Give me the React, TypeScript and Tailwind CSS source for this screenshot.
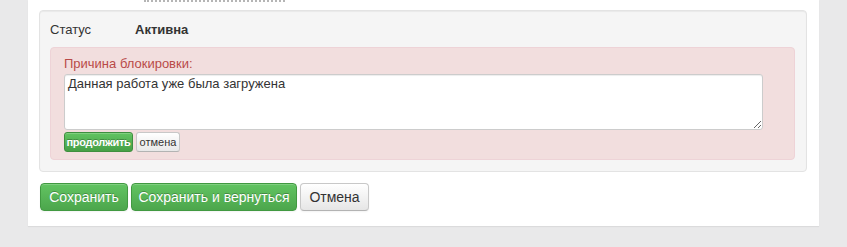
import React from 'react';

const font = { fontFamily: '"Liberation Sans", Arial, sans-serif' };

function GreenButton({ label, w, small }: { label: string; w: number; small?: boolean }) {
  return (
    <button
      className={
        small
          ? 'h-[20px] rounded-[3px] border border-[#3f8f3f] bg-gradient-to-b from-[#62c462] to-[#46a046] text-[11px] font-bold tracking-[-0.3px] leading-[18px] text-white shadow-[inset_0_1px_0_rgba(255,255,255,0.2)] [text-shadow:0_-1px_0_rgba(0,0,0,0.25)]'
          : 'h-[28px] rounded-[4px] border border-[#419941] bg-gradient-to-b from-[#62c462] to-[#4ca64c] text-[14px] leading-[26px] text-white shadow-[inset_0_1px_0_rgba(255,255,255,0.2),0_1px_2px_rgba(0,0,0,0.05)] [text-shadow:0_-1px_0_rgba(0,0,0,0.25)]'
      }
      style={{ width: w }}
    >
      {label}
    </button>
  );
}

function PlainButton({ label, w, small }: { label: string; w: number; small?: boolean }) {
  return (
    <button
      className={
        small
          ? 'h-[20px] rounded-[3px] border border-[#c8c8c8] border-b-[#b3b3b3] bg-gradient-to-b from-white to-[#e8e8e8] text-[11px] leading-[18px] text-[#333] shadow-[inset_0_1px_0_rgba(255,255,255,0.2)]'
          : 'h-[28px] rounded-[4px] border border-[#c8c8c8] border-b-[#b3b3b3] bg-gradient-to-b from-white to-[#e6e6e6] text-[14px] leading-[26px] text-[#333] shadow-[inset_0_1px_0_rgba(255,255,255,0.2),0_1px_2px_rgba(0,0,0,0.05)]'
      }
      style={{ width: w }}
    >
      {label}
    </button>
  );
}

export default function App() {
  return (
    <div className="h-[247px] w-[847px] overflow-hidden bg-[#e9e9ea] pl-[28px]" style={font}>
      <div className="h-[226px] w-[791px] bg-white pl-[11px] shadow-[0_1px_1px_rgba(0,0,0,0.06)]">
        <div className="ml-[105px] h-[2px] w-[141px] border-t-2 border-dotted border-[#b5b5b5]" />
        <div className="mt-[8px] h-[162px] w-[768px] rounded-[4px] border border-[#e3e3e3] bg-[#f5f5f5] pl-[10px] pr-[11px] pt-[9px] shadow-[inset_0_1px_1px_rgba(0,0,0,0.05)]">
          <div className="flex h-[20px] items-center text-[13px] leading-[20px] text-[#333]">
            <span className="w-[85px]">Статус</span>
            <span className="font-bold">Активна</span>
          </div>
          <div className="mt-[7px] h-[113px] rounded-[4px] border border-[#eed3d7] bg-[#f2dede] pl-[13px] pt-[7px]">
            <div className="h-[18px] text-[13px] leading-[18px] text-[#b94a48]">Причина блокировки:</div>
            <textarea
              className="mt-[1px] block h-[56px] w-[699px] rounded-[3px] border border-[#ccc] bg-white px-[3px] py-0 text-[13px] leading-[18px] text-[#333] shadow-[inset_0_1px_1px_rgba(0,0,0,0.075)] outline-none"
              defaultValue="Данная работа уже была загружена"
              style={font}
            />
            <div className="mt-[2px] flex gap-[3px]">
              <GreenButton label="продолжить" w={69} small />
              <PlainButton label="отмена" w={44} small />
            </div>
          </div>
        </div>
        <div className="ml-[1px] mt-[11px] flex gap-[3px]">
          <GreenButton label="Сохранить" w={88} />
          <GreenButton label="Сохранить и вернуться" w={166} />
          <PlainButton label="Отмена" w={69} />
        </div>
      </div>
    </div>
  );
}
